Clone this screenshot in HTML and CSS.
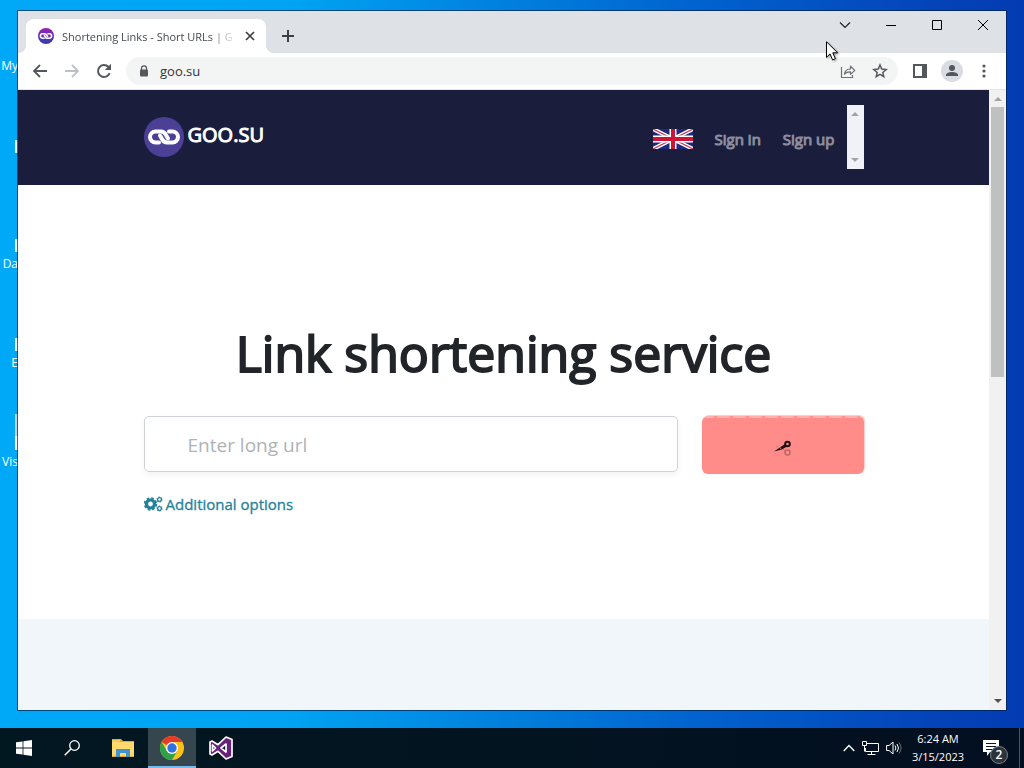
FILE: index.html
```
<!DOCTYPE html>
<html lang="en">
<head>
  <meta charset="UTF-8">
  <meta name="viewport" content="width=device-width, initial-scale=1.0">
  <title>Shortening Links - Short URLs</title>
  <link rel="stylesheet" href="styles.css">
</head>
<body>
  <main class="desktop">
    <ul class="shortcuts">
      <li><span>My</span></li>
      <li><i class="thumb"></i><span>&nbsp;</span></li>
      <li><i class="thumb"></i><span>Da</span></li>
      <li><i class="thumb"></i><span>E</span></li>
      <li><i class="thumb tall"></i><span>Vis</span></li>
    </ul>

    <div class="window">
      <!-- Tabs -->
      <div class="tabs">
        <div class="tab">
          <svg class="favicon" viewBox="0 0 40 40">
            <defs>
              <linearGradient id="fav" x1="0" y1="0" x2="0" y2="1"><stop offset="0" stop-color="#9c1fb0"/><stop offset="1" stop-color="#2e3fae"/></linearGradient>
            </defs>
            <circle cx="20" cy="20" r="20" fill="url(#fav)"/>
            <g fill="none" stroke="#fff" stroke-width="4" stroke-linecap="round">
              <path d="M15 25.500h-3.500a5.500 5.500 0 0 1 0-11H17c3 0 4 1.500 5 3.500l2 3.500"/>
              <path d="M25 14.500h3.500a5.500 5.500 0 0 1 0 11H23c-3 0-4-1.500-5-3.500l-2-3.500"/>
            </g>
          </svg>
          <span class="tab-title">Shortening Links - Short URLs | G</span>
          <button class="tab-close" aria-label="Close tab"><svg width="10" height="10" viewBox="0 0 10 10"><path d="M1 1l8 8M9 1L1 9" stroke="#3c4043" stroke-width="1.700"/></svg></button>
        </div>
        <button class="tab-new" aria-label="New tab"><svg width="12" height="12" viewBox="0 0 12 12"><path d="M6 0v12M0 6h12" stroke="#3c4043" stroke-width="2"/></svg></button>
        <div class="controls">
          <button aria-label="Search tabs"><svg width="12" height="12" viewBox="0 0 12 12"><path d="M1 3.500l5 5 5-5" fill="none" stroke="#222" stroke-width="1.200"/></svg></button>
          <button aria-label="Minimize"><svg width="10" height="10" viewBox="0 0 10 10"><path d="M0 5.500h10" stroke="#000"/></svg></button>
          <button aria-label="Maximize"><svg width="10" height="10" viewBox="0 0 10 10"><path d="M.5.5h9v9h-9z" fill="none" stroke="#000"/></svg></button>
          <button aria-label="Close"><svg width="10" height="10" viewBox="0 0 10 10"><path d="M0 0l10 10M10 0L0 10" stroke="#000"/></svg></button>
        </div>
      </div>

      <!-- Toolbar -->
      <div class="toolbar">
        <button aria-label="Back"><svg width="16" height="16" viewBox="0 0 16 16"><path d="M15 8H2M8 2L2 8l6 6" fill="none" stroke="#54585c" stroke-width="1.800"/></svg></button>
        <button aria-label="Forward"><svg width="16" height="16" viewBox="0 0 16 16"><path d="M1 8h13M8 2l6 6-6 6" fill="none" stroke="#bdc1c6" stroke-width="1.800"/></svg></button>
        <button aria-label="Reload"><svg width="16" height="16" viewBox="0 0 16 16"><path d="M13.600 10.200A6 6 0 1 1 12.300 3.800L14 5.500" fill="none" stroke="#54585c" stroke-width="2"/><path d="M15 .8V7H8.800z" fill="#54585c"/></svg></button>
        <div class="omnibox">
          <svg width="10" height="12" viewBox="0 0 10 12"><path d="M2.500 5V3.300a2.500 2.500 0 0 1 5 0V5" fill="none" stroke="#54585c" stroke-width="1.300"/><rect x="1" y="4.500" width="8" height="7" rx="1" fill="#54585c"/></svg>
          <input type="text" value="goo.su" aria-label="Address">
          <button aria-label="Share"><svg width="16" height="16" viewBox="0 0 16 16"><path d="M1.500 4v10.500h11V12M4.500 11c.5-3.500 2.500-5 6-5V3.200l4.300 4.200-4.300 4V8.800c-2.700-.1-4.500.4-6 2.200z" fill="none" stroke="#6b6f73" stroke-width="1.200" stroke-linejoin="round"/></svg></button>
          <button aria-label="Bookmark"><svg width="16" height="16" viewBox="0 0 16 16"><path d="M8 2l1.700 4.100 4.500.4-3.400 2.900 1 4.300L8 11.400l-3.800 2.300 1-4.300L1.800 6.500l4.500-.4z" fill="none" stroke="#54585c" stroke-width="1.500"/></svg></button>
        </div>
        <button class="panel" aria-label="Side panel"><svg width="14" height="14" viewBox="0 0 14 14"><path d="M1 1h12v12H1z" fill="none" stroke="#54585c" stroke-width="2"/><path d="M9 1h4v12H9z" fill="#54585c"/></svg></button>
        <button aria-label="Profile"><svg width="22" height="22" viewBox="0 0 22 22"><circle cx="11" cy="11" r="11" fill="#dadce3"/><circle cx="11" cy="8" r="3" fill="#54585c"/><path d="M5 16v-1c0-2 3-3 6-3s6 1 6 3v1z" fill="#54585c"/></svg></button>
        <button aria-label="Menu"><svg width="4" height="14" viewBox="0 0 4 14" fill="#54585c"><circle cx="2" cy="2" r="1.600"/><circle cx="2" cy="7" r="1.600"/><circle cx="2" cy="12" r="1.600"/></svg></button>
      </div>

      <!-- Page -->
      <div class="viewport">
        <div class="page">
          <header class="header">
            <div class="container header-row">
              <a class="brand" href="#">
                <svg width="40" height="40" viewBox="0 0 40 40">
                  <circle cx="20" cy="20" r="20" fill="#4b3f96"/>
                  <g fill="none" stroke="#fff" stroke-width="4" stroke-linecap="round">
                    <path d="M15 25.500h-3.500a5.500 5.500 0 0 1 0-11H17c3 0 4 1.500 5 3.500l2 3.500"/>
                    <path d="M25 14.500h3.500a5.500 5.500 0 0 1 0 11H23c-3 0-4-1.500-5-3.500l-2-3.500"/>
                  </g>
                </svg>
                <span>GOO.SU</span>
              </a>
              <nav class="nav">
                <a href="#" aria-label="English">
                  <svg width="40" height="20" viewBox="0 0 40 20">
                    <path fill="#1d2a80" d="M0 0h40v20H0z"/>
                    <path d="M0 0l40 20M40 0L0 20" stroke="#fff" stroke-width="4"/>
                    <path d="M0 0l20 10M40 20L20 10M40 0L20 10M0 20l20-10" stroke="#c8374f" stroke-width="1.200"/>
                    <path d="M20 0v20M0 10h40" stroke="#fff" stroke-width="7"/>
                    <path d="M20 0v20M0 10h40" stroke="#cc1437" stroke-width="4"/>
                  </svg>
                </a>
                <a href="#">Sign in</a>
                <a href="#">Sign up</a>
                <div class="mini-scroll"><i class="up"></i><i class="down"></i></div>
              </nav>
            </div>
          </header>
          <section class="hero">
            <div class="container">
              <h1>Link shortening service</h1>
              <form class="shorten">
                <input type="text" placeholder="Enter long url" aria-label="Enter long url">
                <button type="button" aria-label="Shorten">
                  <svg width="18" height="18" viewBox="0 0 18 18">
                    <path d="M0 12.500L11 5l2 2.500-5 3z" fill="#1e1214"/>
                    <circle cx="13.500" cy="5" r="2.300" fill="none" stroke="#1e1214" stroke-width="2"/>
                    <path d="M2 7l10 5" stroke="#d96f70" stroke-dasharray="2 2"/>
                    <circle cx="13.500" cy="13.500" r="2.500" fill="none" stroke="#bd6769" stroke-width="1.500"/>
                  </svg>
                </button>
              </form>
              <a class="options" href="#">
                <svg width="19" height="16" viewBox="0 0 19 16">
                  <circle cx="6.500" cy="8" r="4" fill="none" stroke="#23829a" stroke-width="3.200"/>
                  <circle cx="6.500" cy="8" r="5.800" fill="none" stroke="#23829a" stroke-width="1.800" stroke-dasharray="2.600 1.955"/>
                  <circle cx="15.500" cy="3.500" r="1.900" fill="none" stroke="#23829a" stroke-width="1.300"/>
                  <circle cx="15.500" cy="3.500" r="2.700" fill="none" stroke="#23829a" stroke-width=".8" stroke-dasharray="1.300 1.530"/>
                  <circle cx="15.500" cy="12.500" r="1.900" fill="none" stroke="#23829a" stroke-width="1.300"/>
                  <circle cx="15.500" cy="12.500" r="2.700" fill="none" stroke="#23829a" stroke-width=".8" stroke-dasharray="1.300 1.530"/>
                </svg>
                <span>Additional options</span>
              </a>
            </div>
          </section>
          <section class="below"></section>
        </div>
        <div class="scrollbar">
          <i class="up"></i>
          <div class="track"><div class="handle"></div></div>
          <i class="down dark"></i>
        </div>
      </div>
    </div>

    <svg class="cursor" width="14" height="21" viewBox="0 0 14 21"><path d="M.5.8v15.500l3.500-3.400 2.600 6 2.800-1.200-2.600-5.900h4.900z" fill="#fff" stroke="#000"/></svg>
  </main>

  <!-- Taskbar -->
  <footer class="taskbar">
    <button aria-label="Start"><svg width="16" height="16" viewBox="0 0 16 16" fill="#fff"><path d="M0 2.300L6.600 1.400v6.200H0zM7.400 1.200L16 0v7.600H7.400zM0 8.400h6.600v6.200L0 13.700zM7.400 8.400H16V16l-8.600-1.200z"/></svg></button>
    <button aria-label="Search"><svg width="16" height="16" viewBox="0 0 16 16"><circle cx="10.500" cy="5.500" r="4.800" fill="none" stroke="#fff" stroke-width="1.300"/><path d="M7 9L.7 15.300" stroke="#fff" stroke-width="1.500"/></svg></button>
    <div class="apps">
      <button aria-label="File Explorer">
        <svg width="22" height="18" viewBox="0 0 22 18"><path d="M0 0h9l2 2h11v16H0z" fill="#e9a921"/><path d="M0 3h22v14H0z" fill="#ffd96b"/><path d="M4 18v-8h14v8h-4v-4H8v4z" fill="#3f93cf"/><path d="M0 2h7l1-1" stroke="#ffe9a0" fill="none"/></svg>
      </button>
      <button class="active" aria-label="Chrome">
        <svg width="24" height="24" viewBox="0 0 24 24"><circle cx="12" cy="12" r="12" fill="#fbc116"/><path d="M12 12L1.600 6A12 12 0 0 1 22.400 6H12z" fill="#e33b2e"/><path d="M1.600 6A12 12 0 0 0 12 24l5.200-9L12 12l-5.200 3z" fill="#2da14c"/><circle cx="12" cy="12" r="6" fill="#fff"/><circle cx="12" cy="12" r="4.700" fill="#2f73e0"/></svg>
      </button>
      <button aria-label="Visual Studio">
        <svg width="26" height="26" viewBox="0 0 26 26"><path d="M18 2l6 2.500v17L18 24l-8-7.700L4 20l-2-1V7l2-1 6 3.700zM18 9l-5 4 5 4zM4.500 10v6l3-3z" fill="#68217a" fill-rule="evenodd" stroke="#fff" stroke-width="1.700" stroke-linejoin="round"/></svg>
      </button>
    </div>
    <div class="tray">
      <svg width="12" height="8" viewBox="0 0 12 8"><path d="M.7 7L6 1.500 11.300 7" fill="none" stroke="#fff" stroke-width="1.300"/></svg>
      <svg width="17" height="14" viewBox="0 0 17 14"><path d="M5 2.500h11.500v8H3.500V7M9.500 10.500v3M5.500 13.500h8M.5.500h4v4h-4zM2.500 4.500v6" fill="none" stroke="#fff"/></svg>
      <svg width="16" height="14" viewBox="0 0 16 14"><path d="M.6 4.500h2.500L7 1v12L3.100 9.500H.6z" fill="none" stroke="#fff"/><path d="M9 4.500q1.800 2.500 0 5M11 3q3 4 0 8" fill="none" stroke="#fff"/><path d="M13 1.500q4 5.500 0 11" fill="none" stroke="#68727c"/></svg>
      <div class="clock"><span>6:24 AM</span><span>3/15/2023</span></div>
      <button class="notes" aria-label="Notifications">
        <svg width="16" height="16" viewBox="0 0 16 16"><path d="M0 0h16v12H7l-3 4v-4H0z" fill="#fff"/><path d="M3 3.500h10M3 6.500h10M3 9.500h6" stroke="#0a1622"/></svg>
        <span class="badge">2</span>
      </button>
      <i class="peek"></i>
    </div>
  </footer>
</body>
</html>
```

FILE: styles.css
```
* {
  box-sizing: border-box;
}
body {
  margin: 0;
  height: 100vh;
  display: flex;
  flex-direction: column;
  overflow: hidden;
  font-family: "Open Sans", "Noto Sans", sans-serif;
  font-size: 12px;
}
button {
  display: flex;
  align-items: center;
  justify-content: center;
  padding: 0;
  border: none;
  background: none;
  color: inherit;
  font-family: inherit;
}
input {
  font-family: inherit;
}
a {
  text-decoration: none;
}
svg {
  display: block;
  flex: none;
}

/* Desktop */
.desktop {
  position: relative;
  flex: 1;
  min-height: 0;
  display: flex;
  padding: 11px 18px 18px;
  background: linear-gradient(to right, #00a8f8 0%, #00a4f3 28%, #0087e2 45%, #0063cf 68%, #0442b8 92%, #033cb2 100%);
}
.shortcuts {
  position: absolute;
  top: 0;
  left: 0;
  width: 18px;
  margin: 0;
  padding: 0;
  overflow: hidden;
  list-style: none;
  color: #fff;
  line-height: 16px;
}
.shortcuts li {
  height: 99px;
  display: flex;
  flex-direction: column;
  align-items: flex-end;
  justify-content: flex-end;
  padding-bottom: 25px;
}
.thumb {
  width: 3px;
  height: 13px;
  margin-bottom: 4px;
  background-color: #e8f6ff;
}
.thumb.tall {
  height: 36px;
  background: linear-gradient(#b9d3dd 60%, #fff 60%);
}
.window {
  position: relative;
  flex: 1;
  min-width: 0;
  display: flex;
  flex-direction: column;
  background-color: #fff;
  box-shadow: 0 0 0 1px rgba(0, 30, 70, 0.7);
}
.cursor {
  position: absolute;
  top: 41px;
  left: 826px;
  filter: drop-shadow(1px 1px 1px rgba(0, 0, 0, 0.4));
}

/* Tabs */
.tabs {
  display: flex;
  height: 42px;
  padding-left: 8px;
  background-color: #dee1e6;
}
.tab {
  position: relative;
  display: flex;
  align-items: center;
  width: 240px;
  margin-top: 8px;
  padding: 0 10px 0 12px;
  border-radius: 8px 8px 0 0;
  background-color: #fff;
}
.tab::before, .tab::after {
  content: "";
  position: absolute;
  bottom: 0;
  width: 8px;
  height: 8px;
}
.tab::before {
  left: -8px;
  background: radial-gradient(circle at 0 0, transparent 8px, #fff 8px);
}
.tab::after {
  right: -8px;
  background: radial-gradient(circle at 100% 0, transparent 8px, #fff 8px);
}
.favicon {
  width: 16px;
  height: 16px;
}
.tab-title {
  flex: 1;
  min-width: 0;
  margin: 0 8px;
  overflow: hidden;
  white-space: nowrap;
  color: #45494d;
  font-size: 11px;
  -webkit-mask-image: linear-gradient(to right, #000 85%, transparent);
  mask-image: linear-gradient(to right, #000 85%, transparent);
}
.tab-close {
  width: 12px;
  height: 16px;
}
.tab-new {
  width: 28px;
  margin: 8px 0 0 8px;
}
.controls {
  display: flex;
  height: 28px;
  margin-left: auto;
}
.controls button {
  width: 46px;
}

/* Toolbar */
.toolbar {
  display: flex;
  align-items: center;
  height: 37px;
  padding: 0 6px;
  border-bottom: 1px solid #e3e5e8;
}
.toolbar button {
  width: 32px;
  height: 28px;
}
.omnibox {
  flex: 1;
  display: flex;
  align-items: center;
  height: 28px;
  margin-left: 6px;
  padding: 0 2px 0 13px;
  border-radius: 14px;
  background-color: #f3f5f5;
}
.omnibox input {
  flex: 1;
  min-width: 0;
  margin-left: 11px;
  padding: 0;
  border: none;
  background: none;
  color: #303338;
  font-size: 13px;
}
.toolbar .panel {
  margin-left: 6px;
}

/* Page */
.viewport {
  flex: 1;
  min-height: 0;
  display: flex;
}
.page {
  flex: 1;
  min-width: 0;
  display: flex;
  flex-direction: column;
  overflow: hidden;
}
.container {
  width: 100%;
  max-width: 720px;
  margin: 0 auto;
}
.header {
  padding: 15px 0 16px;
  background-color: #1a1d3c;
}
.header-row {
  display: flex;
  align-items: center;
  justify-content: space-between;
}
.brand {
  display: flex;
  align-items: center;
  gap: 4px;
  color: #fff;
  font-size: 20px;
  line-height: 36px;
  -webkit-text-stroke: 1px #fff;
}
.brand span {
  padding-bottom: 4px;
}
.nav {
  display: flex;
  align-items: center;
  gap: 22px;
}
.nav a {
  padding-top: 4px;
  color: #9394a5;
  font-size: 15px;
  -webkit-text-stroke: 1px #8b8c9e;
}
.mini-scroll {
  display: flex;
  flex-direction: column;
  align-items: center;
  justify-content: space-between;
  width: 17px;
  height: 64px;
  margin-left: -10px;
  padding: 7px 0;
  background-color: #f1f2f8;
}
.up, .down {
  border: 4px solid transparent;
}
.up {
  border-top: none;
  border-bottom-color: #a3a3a3;
}
.down {
  border-bottom: none;
  border-top-color: #a3a3a3;
}
.down.dark {
  border-top-color: #505050;
}
.hero {
  padding: 132px 0 103px;
}
h1 {
  margin: 0 0 27px;
  color: #212529;
  text-align: center;
  font-size: 50px;
  font-weight: 400;
  line-height: 72px;
  -webkit-text-stroke: 2px #212529;
}
.shorten {
  display: grid;
  grid-template-columns: 1fr 162px;
  gap: 24px;
  align-items: start;
}
.shorten input {
  min-width: 0;
  height: 56px;
  padding: 2px 43px 0;
  border: 1px solid #cfd3d7;
  border-radius: 5px;
  color: #495057;
  font-size: 19px;
  box-shadow: 0 3px 6px rgba(0, 0, 0, 0.05);
}
.shorten input::placeholder {
  color: #adb3b6;
}
.shorten button {
  height: 58px;
  padding-top: 6px;
  border-radius: 6px;
  background: repeating-linear-gradient(to right, #ffb0ad 0, #ffb0ad 10px, #ff8c88 14px, #ffb0ad 16px) top / 100% 2px no-repeat #ff8c88;
  box-shadow: 1px -1px 1px #ffc9c7;
}
.options {
  display: inline-flex;
  align-items: center;
  gap: 3px;
  margin-top: 18px;
  color: #23829a;
  font-size: 15px;
  line-height: 24px;
  -webkit-text-stroke: 0.3px #23829a;
}
.below {
  flex: 1;
  background-color: #f1f6fa;
}

/* Scrollbar */
.scrollbar {
  display: flex;
  flex-direction: column;
  align-items: center;
  width: 17px;
  padding: 7px 0;
  background-color: #f1f1f1;
}
.track {
  flex: 1;
  width: 13px;
  margin: 6px 0;
}
.handle {
  height: 46%;
  background-color: #bfc1c1;
}

/* Taskbar */
.taskbar {
  display: flex;
  height: 40px;
  background: linear-gradient(to right, #021821, #020f20);
  color: #fff;
}
.taskbar button {
  width: 48px;
}
.apps {
  display: flex;
  gap: 1px;
  margin-left: 3px;
}
.taskbar .active {
  background-color: #35464f;
  box-shadow: inset 0 -2px #76b9ed;
}
.tray {
  display: flex;
  align-items: center;
  gap: 7px;
  margin-left: auto;
}
.clock {
  display: flex;
  flex-direction: column;
  align-items: center;
  width: 58px;
  font-size: 11px;
  line-height: 18px;
}
.taskbar .notes {
  position: relative;
  width: 42px;
  height: 40px;
  margin-left: -4px;
}
.badge {
  position: absolute;
  right: 4px;
  bottom: 4px;
  width: 18px;
  border: 1px solid #76808a;
  border-radius: 50%;
  background-color: #2a323c;
  font-size: 12px;
  font-weight: 600;
  line-height: 16px;
  text-align: center;
}
.peek {
  width: 5px;
  height: 40px;
  border-left: 1px solid #4a5663;
}
```
